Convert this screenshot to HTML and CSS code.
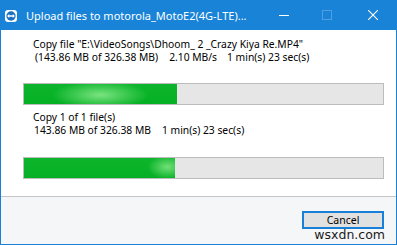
FILE: index.html
```html
<!DOCTYPE html>
<html>
<head>
<meta charset="utf-8">
<link rel="stylesheet" href="styles.css">
</head>
<body>
<div class="window">
  <div class="titlebar">
    <svg class="appicon" width="12" height="12" viewBox="0 0 14 14">
      <rect x="0" y="0" width="14" height="14" rx="3.5" fill="#ffffff"/>
      <circle cx="7" cy="7" r="5.4" fill="#1a6fc2"/>
      <path d="M2.4 7 L5 4.8 L5 6.1 L9 6.1 L9 4.8 L11.6 7 L9 9.2 L9 7.9 L5 7.9 L5 9.2 Z" fill="#ffffff"/>
    </svg>
    <span class="title">Upload files to motorola_MotoE2(4G-LTE)...</span>
    <div class="controls">
      <svg class="ctl min" width="10" height="10" viewBox="0 0 10 10"><line x1="0" y1="5.5" x2="10" y2="5.5" stroke="#fff" stroke-width="1"/></svg>
      <svg class="ctl max" width="10" height="10" viewBox="0 0 10 10"><rect x="0.5" y="0.5" width="9" height="9" fill="none" stroke="#4f9fe2" stroke-width="1"/></svg>
      <svg class="ctl close" width="10" height="10" viewBox="0 0 10 10"><path d="M0 0 L10 10 M10 0 L0 10" stroke="#fff" stroke-width="1.1"/></svg>
    </div>
  </div>
  <div class="content">
    <div class="info first">
      <div>Copy file "E:\VideoSongs\Dhoom_ 2 _Crazy Kiya Re.MP4"</div>
      <div class="indent"><span>(143.86 MB of 326.38 MB)</span><span class="gap-a">2.10 MB/s</span><span class="gap-b">1 min(s) 23 sec(s)</span></div>
    </div>
    <div class="bar"><div class="fill fill1" style="width:42.7%"></div></div>
    <div class="info second">
      <div>Copy 1 of 1 file(s)</div>
      <div class="indent1"><span>143.86 MB of 326.38 MB</span><span class="gap-c">1 min(s) 23 sec(s)</span></div>
    </div>
    <div class="bar"><div class="fill fill2" style="width:42.1%"></div></div>
  </div>
  <div class="footer">
    <button class="cancel">Cancel</button>
    <span class="watermark">wsxdn.com</span>
  </div>
</div>
</body>
</html>
```
FILE: styles.css
```css
html, body {
  margin: 0;
  padding: 0;
  background: #ffffff;
}
body {
  width: 397px;
  height: 245px;
  overflow: hidden;
  font-family: "Noto Sans", "Open Sans", sans-serif;
  font-size: 10.3px;
  color: #000;
}
.window {
  box-sizing: border-box;
  width: 397px;
  height: 245px;
  border: 1px solid #1a7fd6;
  border-top: none;
  display: flex;
  flex-direction: column;
  position: relative;
}
.titlebar {
  height: 30px;
  margin: 0 -1px;
  background: #1883d7;
  display: flex;
  align-items: center;
  color: #fff;
  flex: none;
}
.appicon {
  margin-left: 5px;
  margin-top: 1px;
  flex: none;
}
.title {
  margin-left: 9px;
  font-size: 11px;
  white-space: nowrap;
  flex: 1;
}
.controls {
  display: flex;
  align-items: center;
  margin-right: 19px;
}
.ctl.max {
  margin-left: 33px;
}
.ctl.close {
  margin-left: 36px;
}
.content {
  flex: 1;
  background: #fff;
  padding: 8px 12px 0 22px;
}
.info {
  line-height: 13px;
  padding-left: 10px;
  white-space: nowrap;
}
.info.first {
  margin-bottom: 19px;
}
.info .indent {
  padding-left: 2px;
}
.info .indent1 {
  padding-left: 1px;
}
.gap-a {
  margin-left: 11px;
}
.gap-b {
  margin-left: 10px;
}
.gap-c {
  margin-left: 11px;
}
.info.second {
  margin-top: 6px;
  margin-bottom: 20px;
}
.bar {
  box-sizing: border-box;
  height: 22px;
  border: 1px solid #bcbcbc;
  background: #e6e6e6;
}
.fill {
  height: 100%;
  background: #06b025;
}
.fill1 {
  background:
    radial-gradient(ellipse 48px 14px at 50% 55%, rgba(150,240,150,0.8), rgba(150,240,150,0) 100%),
    linear-gradient(#0cb52b, #06b025);
}
.fill2 {
  background:
    radial-gradient(ellipse 20px 12px at 95% 45%, rgba(140,235,140,0.8), rgba(140,235,140,0) 100%),
    linear-gradient(#0cb52b, #06b025);
}
.footer {
  box-sizing: border-box;
  height: 48px;
  flex: none;
  border-top: 1px solid #c4c4c4;
  background: #f4f6f7;
  display: flex;
  justify-content: flex-end;
  align-items: flex-start;
  padding-right: 12px;
}
.cancel {
  margin-top: 14px;
  width: 82px;
  height: 18px;
  box-sizing: border-box;
  border: 2px solid #1a7fd6;
  background: #e1e1e1;
  font-family: "Noto Sans", "Open Sans", sans-serif;
  font-size: 10.5px;
  line-height: 12px;
  padding: 0;
  color: #000;
}
.watermark {
  position: absolute;
  right: 11px;
  bottom: 2px;
  font-family: "DejaVu Sans", sans-serif;
  font-size: 12.5px;
  line-height: 14px;
  color: #1a1a1a;
}
```
